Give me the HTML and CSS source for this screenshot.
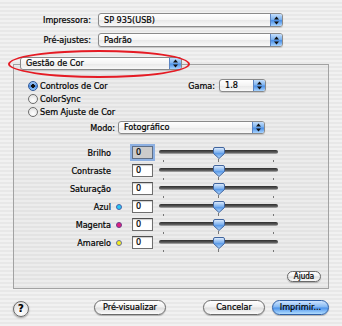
FILE: index.html
```html
<!DOCTYPE html>
<html lang="pt">
<head>
  <meta charset="UTF-8">
  <meta name="viewport" content="width=device-width, initial-scale=1.0">
  <title>Imprimir</title>
  <link rel="stylesheet" href="styles.css">
</head>
<body>
  <svg class="defs" width="0" height="0">
    <defs>
      <linearGradient id="thumb" x1="0" y1="0" x2="0" y2="1">
        <stop offset="0" stop-color="#e4effd"/>
        <stop offset="0.45" stop-color="#7fb2ef"/>
        <stop offset="0.55" stop-color="#5c9be8"/>
        <stop offset="1" stop-color="#b8dbff"/>
      </linearGradient>
      <linearGradient id="track" x1="0" y1="0" x2="0" y2="1">
        <stop offset="0" stop-color="#2e2e2e"/>
        <stop offset="0.6" stop-color="#5a5a5a"/>
        <stop offset="1" stop-color="#b4b4b4"/>
      </linearGradient>
      <symbol id="arrows" viewBox="0 0 7 9">
        <polygon points="3.5,0.5 6,3.6 1,3.6" fill="#111"/>
        <polygon points="1,5.4 6,5.4 3.5,8.5" fill="#111"/>
      </symbol>
      <symbol id="slider" viewBox="0 0 121 18">
        <rect x="1" y="6" width="119" height="4" rx="2" fill="url(#track)"/>
        <line x1="5.5" y1="16" x2="5.5" y2="18" stroke="#777"/>
        <line x1="60.5" y1="15" x2="60.5" y2="18" stroke="#777"/>
        <line x1="115.5" y1="16" x2="115.5" y2="18" stroke="#777"/>
        <path d="M55.5,5 Q55.5,3.5 57,3.5 H65 Q66.5,3.5 66.5,5 V9.5 L61,14.5 L55.5,9.5 Z" fill="url(#thumb)" stroke="#41659e"/>
      </symbol>
    </defs>
  </svg>

  <div class="dialog">
    <div class="field-row">
      <label>Impressora:</label>
      <div class="popup popup-main"><span>SP 935(USB)</span><i class="popup-btn"><svg><use href="#arrows"/></svg></i></div>
    </div>
    <div class="field-row">
      <label>Pré-ajustes:</label>
      <div class="popup popup-main"><span>Padrão</span><i class="popup-btn"><svg><use href="#arrows"/></svg></i></div>
    </div>

    <div class="popup tab-popup"><span>Gestão de Cor</span><i class="popup-btn"><svg><use href="#arrows"/></svg></i></div>
    <div class="highlight"></div>

    <div class="group">
      <div class="options">
        <div class="radios">
          <div class="radio"><span class="radio-mark on"></span>Controlos de Cor</div>
          <div class="radio"><span class="radio-mark"></span>ColorSync</div>
          <div class="radio"><span class="radio-mark"></span>Sem Ajuste de Cor</div>
        </div>
        <div class="gama">
          <label>Gama:</label>
          <div class="popup popup-gama"><span>1.8</span><i class="popup-btn"><svg><use href="#arrows"/></svg></i></div>
        </div>
      </div>

      <div class="mode-row">
        <label>Modo:</label>
        <div class="popup popup-mode"><span>Fotográfico</span><i class="popup-btn"><svg><use href="#arrows"/></svg></i></div>
      </div>

      <div class="sliders">
        <div class="slider-row">
          <label>Brilho</label><span class="swatch"></span>
          <div class="field focus">0</div>
          <svg class="slider"><use href="#slider"/></svg>
        </div>
        <div class="slider-row">
          <label>Contraste</label><span class="swatch"></span>
          <div class="field">0</div>
          <svg class="slider"><use href="#slider"/></svg>
        </div>
        <div class="slider-row">
          <label>Saturação</label><span class="swatch"></span>
          <div class="field">0</div>
          <svg class="slider"><use href="#slider"/></svg>
        </div>
        <div class="slider-row">
          <label>Azul</label><span class="swatch"><i class="dot cyan"></i></span>
          <div class="field">0</div>
          <svg class="slider"><use href="#slider"/></svg>
        </div>
        <div class="slider-row">
          <label>Magenta</label><span class="swatch"><i class="dot magenta"></i></span>
          <div class="field">0</div>
          <svg class="slider"><use href="#slider"/></svg>
        </div>
        <div class="slider-row">
          <label>Amarelo</label><span class="swatch"><i class="dot yellow"></i></span>
          <div class="field">0</div>
          <svg class="slider"><use href="#slider"/></svg>
        </div>
      </div>

      <button class="btn btn-small">Ajuda</button>
    </div>

    <div class="buttons">
      <button class="help">?</button>
      <button class="btn btn-preview">Pré-visualizar</button>
      <button class="btn btn-cancel">Cancelar</button>
      <button class="btn btn-default">Imprimir...</button>
    </div>
  </div>
</body>
</html>
```

FILE: styles.css
```css
body {
  margin: 0;
  font-family: "DejaVu Sans", "Liberation Sans", sans-serif;
  font-stretch: condensed;
  font-size: 9px;
  color: #000;
  -webkit-text-stroke: 0.2px #000;
  background: repeating-linear-gradient(to bottom, #f1f1f1 0, #f1f1f1 2px, #e8e8e8 2px, #e8e8e8 4px);
}

.defs {
  position: absolute;
  width: 0;
  height: 0;
}

.dialog {
  position: relative;
  height: 326px;
  padding-top: 13px;
  box-sizing: border-box;
}

.field-row {
  display: flex;
  align-items: center;
  height: 14px;
  margin-bottom: 6px;
}

.field-row label {
  width: 91px;
  text-align: right;
  margin-right: 7px;
}

/* popup menus */
.popup {
  display: flex;
  height: 14px;
  box-sizing: border-box;
  border: 1px solid #8a8a8a;
  border-radius: 3px;
  background: linear-gradient(to bottom, #ffffff, #f4f4f4 50%, #e8e8e8 52%, #f9f9f9);
  box-shadow: 0 1px 1px rgba(0, 0, 0, 0.15);
  overflow: hidden;
}

.popup span {
  flex: 1;
  padding-left: 5px;
  line-height: 12px;
  white-space: nowrap;
}

.popup-btn {
  width: 11px;
  display: flex;
  align-items: center;
  justify-content: center;
  border-left: 1px solid #5b84c2;
  background: linear-gradient(to bottom, #c4defb, #7db3f0 45%, #4b8fe6 55%, #a8d4ff);
}

.popup-btn svg {
  width: 7px;
  height: 9px;
}

.popup-main {
  width: 185px;
}

.tab-popup {
  position: relative;
  z-index: 1;
  width: 162px;
  height: 13px;
  margin: 10px 0 0 20px;
}

.tab-popup span {
  line-height: 11px;
}

.highlight {
  position: absolute;
  left: 8px;
  top: 50px;
  width: 182px;
  height: 28px;
  box-sizing: border-box;
  border: 2px solid #e51b24;
  border-radius: 50%;
  z-index: 2;
}

/* group box */
.group {
  display: flex;
  flex-direction: column;
  width: 316px;
  height: 225px;
  box-sizing: border-box;
  margin: -6px 0 0 13px;
  border: 1px solid #a2a2a2;
  background: rgba(0, 0, 0, 0.02);
}

.options {
  display: flex;
  margin-top: 14px;
  padding-left: 14px;
}

.radios {
  display: flex;
  flex-direction: column;
}

.radio {
  display: flex;
  align-items: center;
  height: 13px;
  gap: 2px;
}

.radio-mark {
  width: 10px;
  height: 10px;
  box-sizing: border-box;
  border: 1px solid #6e6e6e;
  border-radius: 50%;
  background: radial-gradient(circle at 50% 70%, #ffffff, #dcdcdc);
}

.radio-mark.on {
  border-color: #2f5a9c;
  background: radial-gradient(circle, #111 0 1.6px, transparent 2.1px),
              linear-gradient(to bottom, #a9cdf6, #4a8be2 55%, #9ed0ff);
}

.gama {
  display: flex;
  align-items: center;
  height: 13px;
  margin-left: auto;
  margin-right: 62px;
}

.gama label {
  margin-right: 4px;
}

.popup-gama {
  width: 47px;
  height: 13px;
}

.popup-gama span,
.popup-mode span {
  line-height: 11px;
}

.mode-row {
  display: flex;
  align-items: center;
  height: 13px;
  margin-top: 3px;
}

.mode-row label {
  width: 101px;
  text-align: right;
  margin-right: 3px;
}

.popup-mode {
  width: 147px;
  height: 13px;
}

/* sliders */
.sliders {
  margin-top: 10px;
}

.slider-row {
  display: flex;
  align-items: center;
  height: 18px;
}

.slider-row label {
  width: 97px;
  text-align: right;
}

.swatch {
  width: 21px;
  display: flex;
  align-items: center;
}

.dot {
  width: 6px;
  height: 6px;
  margin-left: 5px;
  box-sizing: border-box;
  border-radius: 50%;
  border: 1px solid #4d5fa8;
}

.dot.cyan { background: #27c6f4; }
.dot.magenta { background: #e0207f; border-color: #6a3f8c; }
.dot.yellow { background: #f4ee1e; border-color: #6a6fa0; }

.field {
  width: 21px;
  height: 13px;
  box-sizing: border-box;
  border: 1px solid #6f6f6f;
  border-top-color: #4f4f4f;
  background: #fff;
  box-shadow: inset 0 1px 1px rgba(0, 0, 0, 0.2);
  padding-left: 3px;
  line-height: 11px;
  margin-top: -2px;
}

.field.focus {
  background: #cbcbcb;
  border-color: #5f6f86;
  box-shadow: 0 0 0 2px #8db0e2;
}

.slider {
  width: 121px;
  height: 18px;
  margin-left: 5px;
}

/* buttons */
.btn {
  font: inherit;
  color: #000;
  padding: 0;
  height: 15px;
  box-sizing: border-box;
  border: 1px solid #6a6a6a;
  border-radius: 8px;
  background: linear-gradient(to bottom, #ffffff, #f0f0f0 48%, #dedede 52%, #fbfbfb);
  box-shadow: 0 1px 1px rgba(0, 0, 0, 0.25);
  line-height: 13px;
}

.btn-small {
  align-self: flex-end;
  width: 34px;
  height: 11px;
  line-height: 9px;
  font-size: 8px;
  border-radius: 6px;
  margin: auto 7px 6px 0;
}

.buttons {
  display: flex;
  align-items: center;
  height: 16px;
  margin-top: 10px;
  padding-left: 13px;
}

.help {
  width: 16px;
  height: 16px;
  padding: 0;
  box-sizing: border-box;
  border: 1px solid #6a6a6a;
  border-radius: 50%;
  background: radial-gradient(circle at 50% 75%, #ffffff, #dadada);
  box-shadow: 0 1px 2px rgba(0, 0, 0, 0.35);
  font: bold 10px "DejaVu Sans", sans-serif;
  line-height: 14px;
  color: #000;
  margin-top: 3px;
}

.btn-preview {
  width: 72px;
  margin-left: 65px;
}

.btn-cancel {
  width: 62px;
  margin-left: 37px;
}

.btn-default {
  width: 57px;
  margin-left: 7px;
  border-color: #2d5ea5;
  background: linear-gradient(to bottom, #cfe5ff, #80b6f2 48%, #4c92ea 52%, #b0dcff);
}
```
